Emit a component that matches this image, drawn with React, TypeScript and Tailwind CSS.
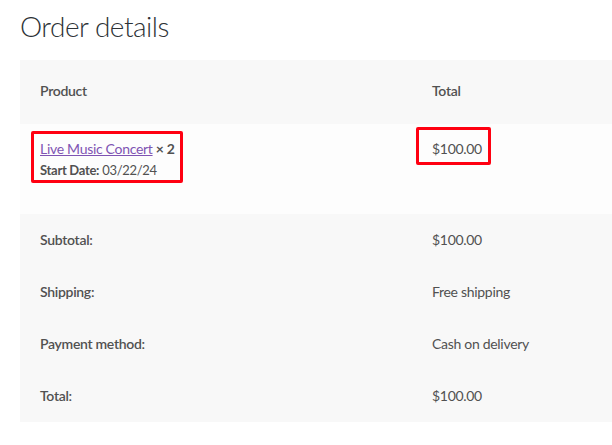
import React from "react";

const rows = [
  { label: "Subtotal:", value: "$100.00" },
  { label: "Shipping:", value: "Free shipping" },
  { label: "Payment method:", value: "Cash on delivery" },
  { label: "Total:", value: "$100.00" },
];

const App = () => {
  return (
    <div
      className="w-[612px] h-[445px] bg-white overflow-hidden pl-[20px] text-[#515151]"
      style={{ fontFamily: "Lato, 'Liberation Sans', sans-serif" }}
    >
      <h1 className="text-[28px] font-light leading-[36px] pt-[8px] text-[#2d3236] tracking-[-0.5px]">
        Order details
      </h1>
      <table className="mt-[16px] w-[592px] border-collapse text-[14px] tracking-[-0.3px]">
        <thead>
          <tr className="bg-[#f8f8f8] h-[64px]">
            <th className="w-[392px] text-left font-semibold pl-[20px] pb-[3px]">Product</th>
            <th className="text-left font-semibold pl-[20px] pb-[3px]">Total</th>
          </tr>
        </thead>
        <tbody>
          <tr className="bg-[#fdfdfd] h-[90px] align-top">
            <td className="pl-[20px] pt-[15px]">
              <div className="relative">
                <div className="leading-[20px]">
                  <a href="#" className="text-[#7f54b3] underline">
                    Live Music Concert
                  </a>{" "}
                  <strong className="font-bold">× 2</strong>
                </div>
                <div className="text-[13px] leading-[20px] mt-[1px]">
                  <strong className="font-bold">Start Date:</strong> 03/22/24
                </div>
                <div className="absolute left-[-9px] top-[-8px] w-[152px] h-[52px] border-[3px] border-[#ff0011] rounded-[2px]" />
              </div>
            </td>
            <td className="pl-[20px] pt-[15px]">
              <div className="relative leading-[20px]">
                $100.00
                <div className="absolute left-[-16px] top-[-12px] w-[75px] h-[38px] border-[3px] border-[#ff0011] rounded-[2px]" />
              </div>
            </td>
          </tr>
        </tbody>
        <tfoot>
          {rows.map((r) => (
            <tr key={r.label} className="bg-[#f8f8f8] h-[52px]">
              <th className="text-left font-semibold pl-[20px] pb-[2px]">{r.label}</th>
              <td className="pl-[20px] pb-[2px]">{r.value}</td>
            </tr>
          ))}
        </tfoot>
      </table>
    </div>
  );
};

export default App;
